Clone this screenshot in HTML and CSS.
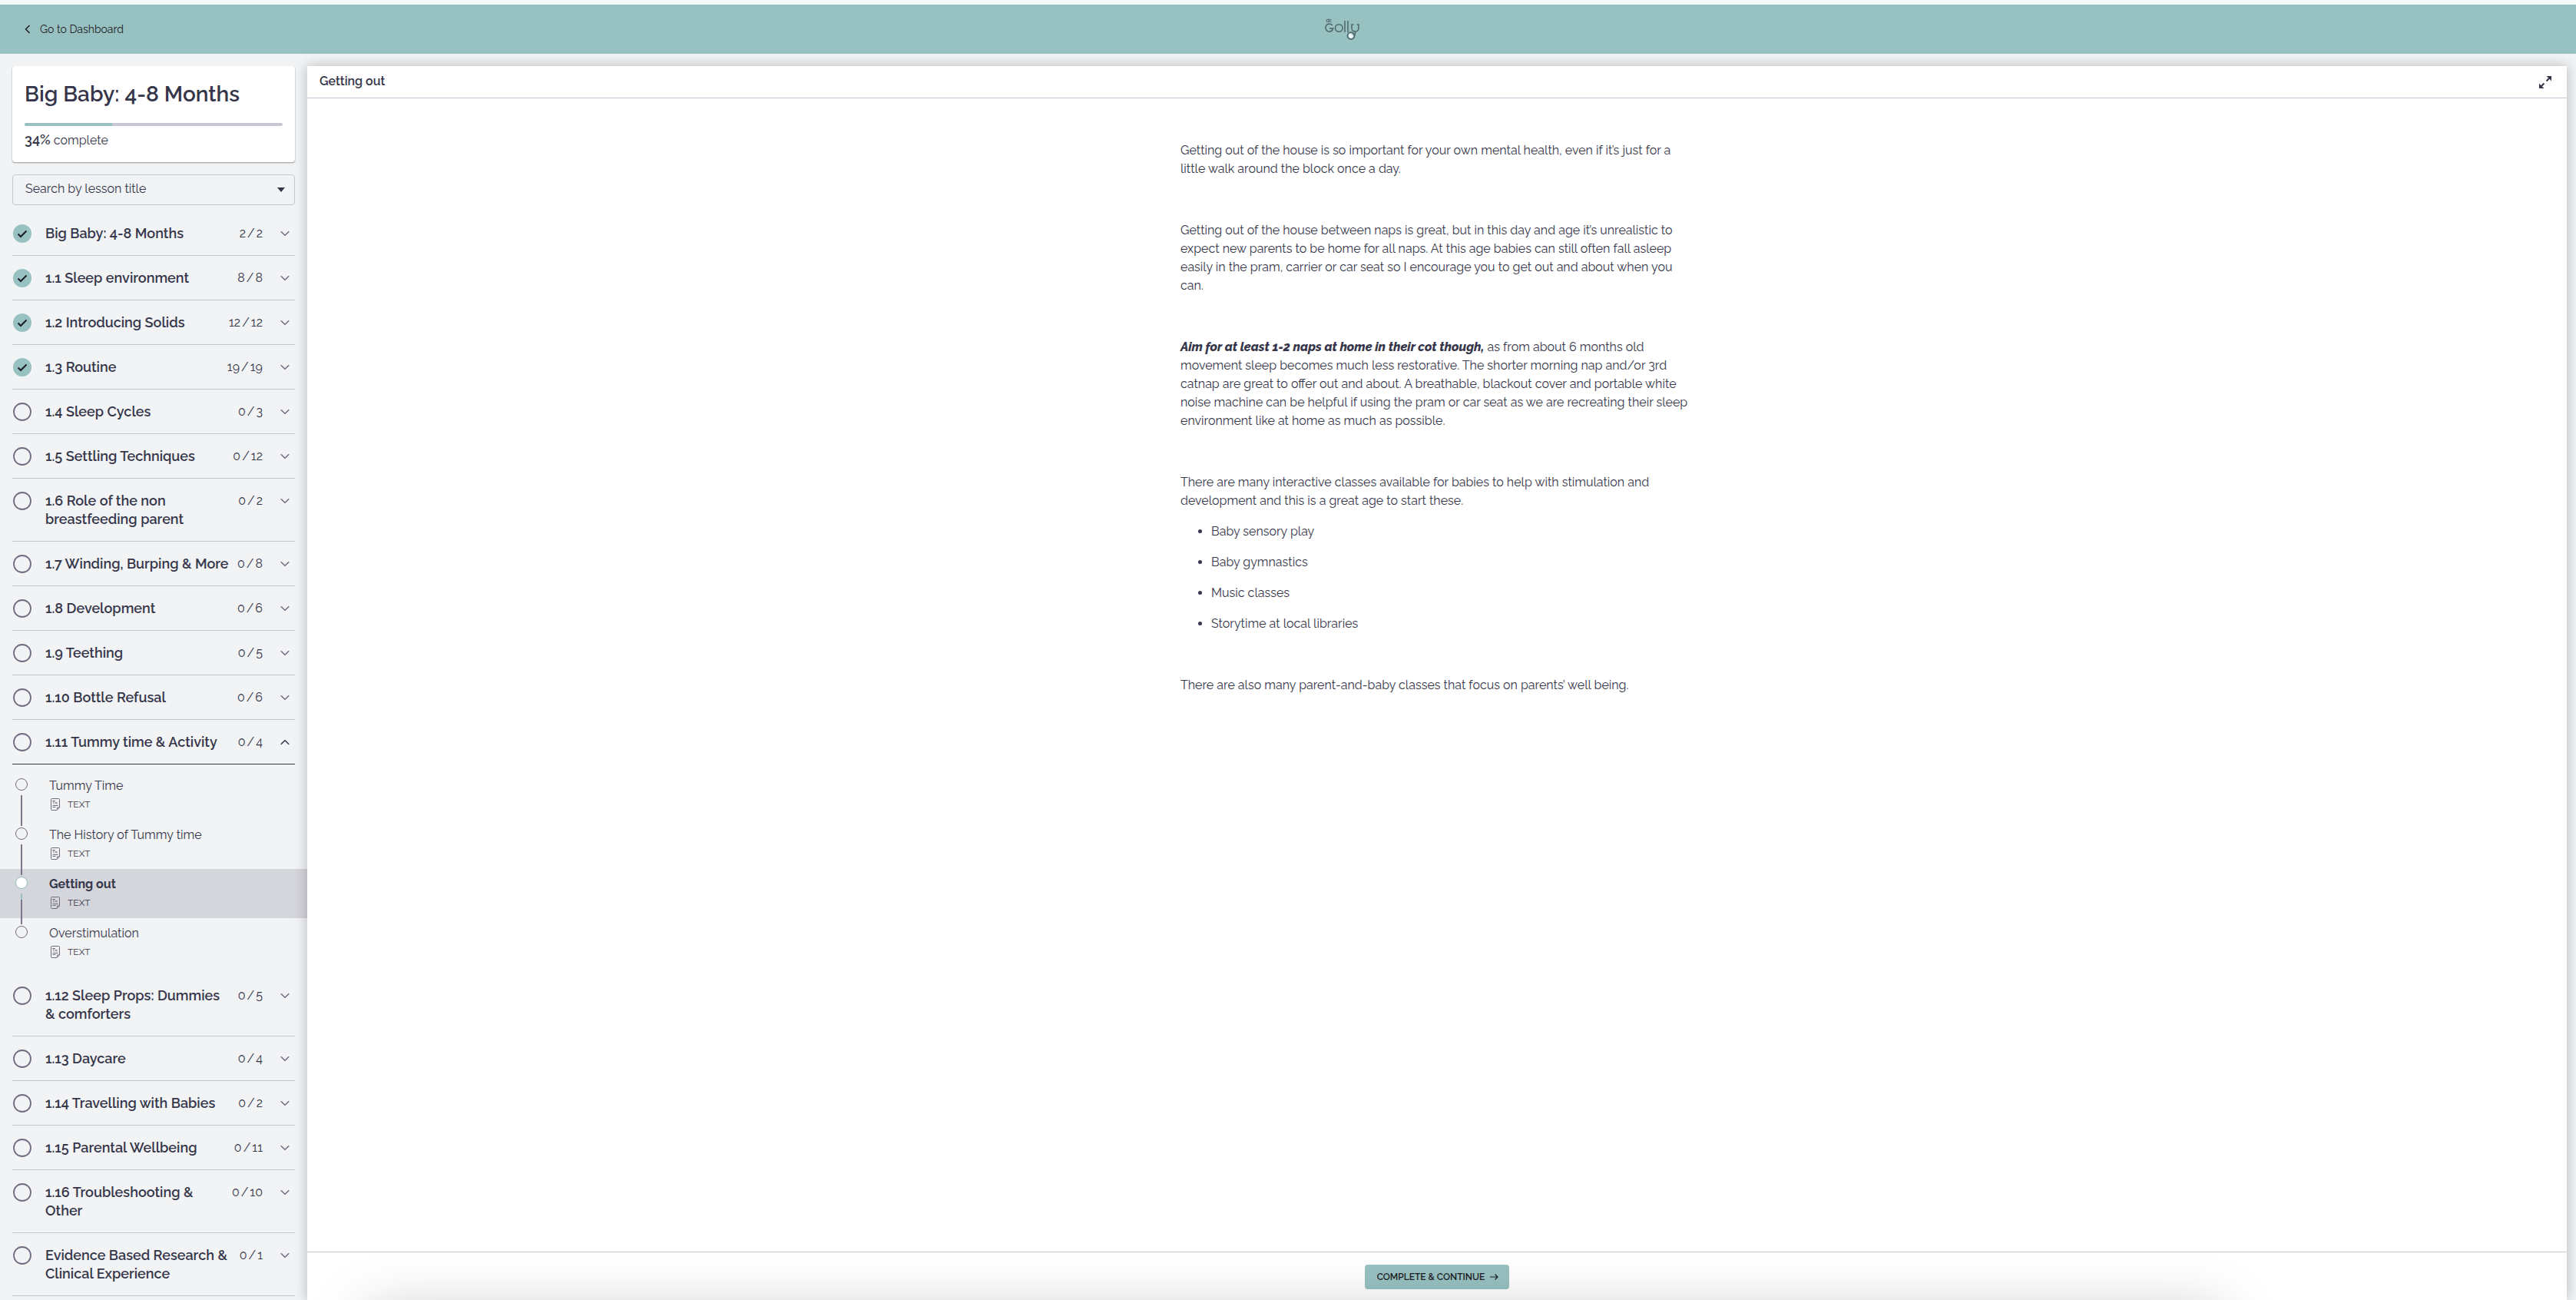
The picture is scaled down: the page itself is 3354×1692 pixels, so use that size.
FILE: index.html
```html
<!DOCTYPE html>
<html lang="en">
<head>
<meta charset="utf-8">
<title>Getting out – Big Baby: 4-8 Months</title>
<link rel="stylesheet" href="styles.css">
</head>
<body>
<svg class="sprite" aria-hidden="true">
  <symbol id="check" viewBox="0 0 24 24"><circle cx="12" cy="12" r="12" fill="#98c1c2"/><path d="M6.500 12.500l3.500 3.500 7.500-7.500" fill="none" stroke="#1d1d24" stroke-width="2"/></symbol>
  <symbol id="ring" viewBox="0 0 24 24"><circle cx="12" cy="12" r="11" fill="none" stroke="#6f6d80" stroke-width="1.800"/></symbol>
  <symbol id="chevron" viewBox="0 0 12 8"><path d="M.7 1.200L6 6.300l5.300-5.100" fill="none" stroke="currentColor" stroke-width="1.500"/></symbol>
  <symbol id="doc" viewBox="0 0 14 16"><path d="M2.500.5h9a1 1 0 0 1 1 1v10.500l-3.500 3.500h-6.500a1 1 0 0 1-1-1v-13a1 1 0 0 1 1-1zM9.500 15v-3h3M3.500 9.500h7M3.500 11.500h4" fill="none" stroke="currentColor"/><path d="M3 3.500h4M5 3.500v4M7 4.800l2.500 2.700M9.500 4.800L7 7.500" fill="none" stroke="currentColor" stroke-width=".9"/></symbol>
</svg>
<header class="topbar">
  <a class="back" href="#"><svg class="back-icon" viewBox="0 0 8 12"><path d="M6.500 1L1.500 6l5 5" fill="none" stroke="currentColor" stroke-width="1.500"/></svg>Go to Dashboard</a>
  <svg class="logo" viewBox="0 0 46 32" role="img" aria-label="dr. Golly" fill="none" stroke="#4d6568" stroke-width="1.500">
    <text class="logo-dr" x="1.500" y="7">dr.</text>
    <path d="M9.800 11a5 5 0 1 0 1 4H6"/><circle cx="18.300" cy="14.500" r="4.800"/><path d="M26 5v15M30 5v15M37.500 10H35v4.500a4.500 4.500 0 0 0 9 0V10h-2.500M39.500 19c0 2 .2 3-.8 5"/>
    <circle cx="34" cy="24.500" r="4.400" stroke-width="1.800"/><path d="M34 21.500a3 3 0 1 0 3 3q-2.500 0-3-3z" fill="#f4ffff" stroke="#d9f2f2" stroke-width="1"/>
  </svg>
</header>
<div class="layout">
  <aside class="sidebar">
    <section class="course">
      <h1 class="course-title">Big Baby: 4-8 Months</h1>
      <div class="progress"><div class="progress-fill" style="width:34%"></div></div>
      <p class="progress-label"><span class="percent">34%</span> complete</p>
    </section>
    <div class="search"><select class="search-select" aria-label="Search by lesson title"><option>Search by lesson title</option></select><span class="caret"></span></div>
    <nav class="chapters" aria-label="Chapters">
      <button class="chapter"><svg class="status"><use href="#check"/></svg><span class="name">Big Baby: 4-8 Months</span><span class="count">2<i>/</i>2</span><svg class="chev"><use href="#chevron"/></svg></button>
      <button class="chapter"><svg class="status"><use href="#check"/></svg><span class="name">1.1 Sleep environment</span><span class="count">8<i>/</i>8</span><svg class="chev"><use href="#chevron"/></svg></button>
      <button class="chapter"><svg class="status"><use href="#check"/></svg><span class="name">1.2 Introducing Solids</span><span class="count">12<i>/</i>12</span><svg class="chev"><use href="#chevron"/></svg></button>
      <button class="chapter"><svg class="status"><use href="#check"/></svg><span class="name">1.3 Routine</span><span class="count">19<i>/</i>19</span><svg class="chev"><use href="#chevron"/></svg></button>
      <button class="chapter"><svg class="status"><use href="#ring"/></svg><span class="name">1.4 Sleep Cycles</span><span class="count">0<i>/</i>3</span><svg class="chev"><use href="#chevron"/></svg></button>
      <button class="chapter"><svg class="status"><use href="#ring"/></svg><span class="name">1.5 Settling Techniques</span><span class="count">0<i>/</i>12</span><svg class="chev"><use href="#chevron"/></svg></button>
      <button class="chapter"><svg class="status"><use href="#ring"/></svg><span class="name">1.6 Role of the non<br>breastfeeding parent</span><span class="count">0<i>/</i>2</span><svg class="chev"><use href="#chevron"/></svg></button>
      <button class="chapter"><svg class="status"><use href="#ring"/></svg><span class="name">1.7 Winding, Burping &amp; More</span><span class="count">0<i>/</i>8</span><svg class="chev"><use href="#chevron"/></svg></button>
      <button class="chapter"><svg class="status"><use href="#ring"/></svg><span class="name">1.8 Development</span><span class="count">0<i>/</i>6</span><svg class="chev"><use href="#chevron"/></svg></button>
      <button class="chapter"><svg class="status"><use href="#ring"/></svg><span class="name">1.9 Teething</span><span class="count">0<i>/</i>5</span><svg class="chev"><use href="#chevron"/></svg></button>
      <button class="chapter"><svg class="status"><use href="#ring"/></svg><span class="name">1.10 Bottle Refusal</span><span class="count">0<i>/</i>6</span><svg class="chev"><use href="#chevron"/></svg></button>
      <button class="chapter open" aria-expanded="true"><svg class="status"><use href="#ring"/></svg><span class="name">1.11 Tummy time &amp; Activity</span><span class="count">0<i>/</i>4</span><svg class="chev"><use href="#chevron"/></svg></button>
      <ul class="lessons">
        <li><a class="lesson" href="#"><span class="track"><span class="dot"></span><span class="line"></span></span><span class="lesson-text"><span class="lesson-name">Tummy Time</span><span class="kind"><svg class="doc"><use href="#doc"/></svg>TEXT</span></span></a></li>
        <li><a class="lesson" href="#"><span class="track"><span class="dot"></span><span class="line"></span></span><span class="lesson-text"><span class="lesson-name">The History of Tummy time</span><span class="kind"><svg class="doc"><use href="#doc"/></svg>TEXT</span></span></a></li>
        <li><a class="lesson current" href="#" aria-current="page"><span class="track"><span class="dot"></span><span class="line"></span></span><span class="lesson-text"><span class="lesson-name">Getting out</span><span class="kind"><svg class="doc"><use href="#doc"/></svg>TEXT</span></span></a></li>
        <li><a class="lesson" href="#"><span class="track"><span class="dot"></span></span><span class="lesson-text"><span class="lesson-name">Overstimulation</span><span class="kind"><svg class="doc"><use href="#doc"/></svg>TEXT</span></span></a></li>
      </ul>
      <button class="chapter"><svg class="status"><use href="#ring"/></svg><span class="name">1.12 Sleep Props: Dummies<br>&amp; comforters</span><span class="count">0<i>/</i>5</span><svg class="chev"><use href="#chevron"/></svg></button>
      <button class="chapter"><svg class="status"><use href="#ring"/></svg><span class="name">1.13 Daycare</span><span class="count">0<i>/</i>4</span><svg class="chev"><use href="#chevron"/></svg></button>
      <button class="chapter"><svg class="status"><use href="#ring"/></svg><span class="name">1.14 Travelling with Babies</span><span class="count">0<i>/</i>2</span><svg class="chev"><use href="#chevron"/></svg></button>
      <button class="chapter"><svg class="status"><use href="#ring"/></svg><span class="name">1.15 Parental Wellbeing</span><span class="count">0<i>/</i>11</span><svg class="chev"><use href="#chevron"/></svg></button>
      <button class="chapter"><svg class="status"><use href="#ring"/></svg><span class="name">1.16 Troubleshooting &amp;<br>Other</span><span class="count">0<i>/</i>10</span><svg class="chev"><use href="#chevron"/></svg></button>
      <button class="chapter"><svg class="status"><use href="#ring"/></svg><span class="name">Evidence Based Research &amp;<br>Clinical Experience</span><span class="count">0<i>/</i>1</span><svg class="chev"><use href="#chevron"/></svg></button>
    </nav>
  </aside>
  <main class="player">
    <div class="player-head">
      <h2 class="player-title">Getting out</h2>
      <button class="expand" aria-label="Full screen"><svg class="expand-icon" viewBox="0 0 16 16"><path d="M9.500 6.500l5-5M6.500 9.500l-5 5" stroke="currentColor" stroke-width="2"/><path d="M9.500 0H16v6.500l-2-2.200-2.300-2.300zM0 9.500V16h6.500l-2.200-2L2 11.700z" fill="currentColor"/></svg></button>
    </div>
    <div class="scroll">
      <article class="content">
        <p>Getting out of the house is so important for your own mental health, even if it’s just for a<br>little walk around the block once a day.</p>
        <p>Getting out of the house between naps is great, but in this day and age it’s unrealistic to<br>expect new parents to be home for all naps. At this age babies can still often fall asleep<br>easily in the pram, carrier or car seat so I encourage you to get out and about when you<br>can.</p>
        <p><b><i>Aim for at least 1-2 naps at home in their cot though,</i></b> as from about 6 months old<br>movement sleep becomes much less restorative. The shorter morning nap and/or 3rd<br>catnap are great to offer out and about. A breathable, blackout cover and portable white<br>noise machine can be helpful if using the pram or car seat as we are recreating their sleep<br>environment like at home as much as possible.</p>
        <p>There are many interactive classes available for babies to help with stimulation and<br>development and this is a great age to start these.</p>
        <ul class="bullets">
          <li>Baby sensory play</li>
          <li>Baby gymnastics</li>
          <li>Music classes</li>
          <li>Storytime at local libraries</li>
        </ul>
        <p>There are also many parent-and-baby classes that focus on parents’ well being.</p>
      </article>
    </div>
    <footer class="player-foot">
      <button class="complete">COMPLETE &amp; CONTINUE<svg class="arrow" viewBox="0 0 11 8"><path d="M0 4h10M6.500.5L10 4 6.500 7.500" fill="none" stroke="currentColor" stroke-width="1.200"/></svg></button>
    </footer>
  </main>
</div>
<div class="shade" aria-hidden="true"></div>
</body>
</html>
```
FILE: styles.css
```css
* { box-sizing: border-box; }
body {
  position: relative;
  margin: 0;
  height: 100vh;
  display: flex;
  flex-direction: column;
  overflow: hidden;
  background: #f1f3f5;
  color: #36364a;
  font: 16px/24px Raleway, Lato, sans-serif;
}
/* soft shade rising over the bottom edge of the window */
.shade {
  position: absolute;
  left: 0;
  right: 0;
  bottom: 0;
  height: 80px;
  overflow: hidden;
  pointer-events: none;
}
.shade::after {
  content: "";
  display: block;
  height: 200px;
  margin: 100px 464px 0 480px;
  box-shadow: 0 0 80px rgba(0, 0, 0, .26);
}
button { font: inherit; color: inherit; border: 0; background: none; padding: 0; text-align: left; }
a { color: inherit; text-decoration: none; }
b { font-weight: 800; }
h1, h2, p, ul { margin: 0; padding: 0; }
ul { list-style: none; }
svg { display: block; flex: none; }
.sprite { width: 0; height: 0; position: absolute; }

.topbar {
  flex: none;
  display: grid;
  grid-template-columns: auto 1fr;
  align-items: center;
  height: 70px;
  padding: 0 18px 0 32px;
  background: #98c1c2;
  border-top: 6px solid #dbe6e4;
  border-image: linear-gradient(#f4faf8 66%, #dbe6e4 66%) 6 0 0;
}
.back { display: flex; align-items: center; gap: 12px; font-size: 14px; color: #1d1d24; }
.back-icon { width: 8px; height: 12px; }
.logo { width: 46px; height: 32px; justify-self: center; }
.logo-dr { fill: #4d6568; stroke: none; font-size: 7px; font-weight: 700; }

.layout { flex: 1; min-height: 0; display: flex; padding: 16px 12px 0 0; }
.sidebar { flex: none; width: 400px; overflow: hidden; }
.course {
  margin: 0 16px 16px;
  padding: 20px 16px 16px;
  background: #fff;
  border-radius: 4px;
  box-shadow: 0 1px 2px rgba(0, 0, 0, .4);
}
.course-title { font-size: 28px; line-height: 34px; font-weight: 600; }
.progress { height: 4px; margin: 20px 0 7px; border-radius: 2px; background: #c8c8d4; overflow: hidden; }
.progress-fill { height: 100%; background: #98c1c2; }
.percent { font-size: 18px; line-height: 20px; font-weight: 600; }

.search { position: relative; margin: 0 16px 8px; }
.search-select {
  display: block;
  width: 100%;
  height: 40px;
  padding: 0 16px 2px;
  appearance: none;
  border: 1px solid #c5c5d3;
  border-radius: 4px;
  background: transparent;
  font: inherit;
  color: inherit;
}
.caret { position: absolute; right: 13px; top: 17px; border: 5px solid transparent; border-top: 6px solid #36364a; border-bottom: 0; pointer-events: none; }

.chapter {
  display: flex;
  align-items: flex-start;
  width: 368px;
  margin: 0 16px;
  padding: 17px 7px 16px 1px;
  border-bottom: 1px solid #c5c5d3;
  line-height: 24px;
}
.status { width: 24px; height: 24px; margin-right: 18px; }
.name { flex: 1; font-size: 18px; font-weight: 600; white-space: nowrap; }
.count { margin-right: 23px; }
.count i { margin: 0 2px; font-style: normal; }
.chev { width: 12px; height: 8px; margin-top: 8px; color: #6f6d80; }
.open { border-color: #36364a; }
.open .chev { transform: rotate(180deg); color: #36364a; }

.lessons { padding: 8px 0; }
.lesson { display: flex; height: 64px; padding: 8px 20px 0; }
.track { flex: none; width: 16px; }
.dot { display: block; width: 16px; height: 16px; margin-top: 2px; border: 1px solid #6f6d80; border-radius: 50%; }
.line { display: block; position: relative; z-index: 1; width: 2px; height: 40px; margin: 6px auto 0; background: #7b7989; }
.lesson-text { margin-left: 28px; }
.lesson-name { display: block; }
.kind { display: flex; align-items: center; gap: 9px; padding-left: 1px; font-size: 12px; }
.doc { width: 14px; height: 16px; color: #6f6d80; }
.current { background: #d5d6dc; }
.current .lesson-name { font-weight: 700; }
.current .dot { background: #fff; border-color: #98c1c2; }
.current .line { background: linear-gradient(#98c1c2 8px, #7b7989 8px); }

.player {
  flex: 1;
  min-width: 0;
  display: flex;
  flex-direction: column;
  background: #fff;
  box-shadow: 0 0 16px rgba(0, 0, 0, .25);
}
.player-head {
  flex: none;
  display: flex;
  align-items: center;
  justify-content: space-between;
  height: 42px;
  padding: 0 20px 0 16px;
  border-bottom: 1px solid #c5c5d3;
}
.player-title { padding-bottom: 2px; font-size: 16px; line-height: 24px; font-weight: 600; }
.expand-icon { width: 16px; height: 16px; }
.scroll { flex: 1; min-height: 0; overflow: hidden; }
.content { width: 668px; margin: 56px auto 0; white-space: nowrap; }
.content p { margin-bottom: 56px; }
.content p:has(+ .bullets) { margin-bottom: 16px; }
.bullets { margin-bottom: 56px; padding-left: 40px; list-style: disc; }
.bullets li { margin-bottom: 16px; }
.player-foot {
  flex: none;
  display: flex;
  justify-content: center;
  padding: 16px 0 14px;
  border-top: 1px solid #c5c5d3;
}
.complete {
  display: flex;
  align-items: center;
  gap: 7px;
  height: 32px;
  padding: 0 14px 0 16px;
  border-radius: 4px;
  background: #98c1c2;
  color: #1d1d24;
  font-size: 12px;
  font-weight: 600;
}
.arrow { width: 11px; height: 8px; }
```
